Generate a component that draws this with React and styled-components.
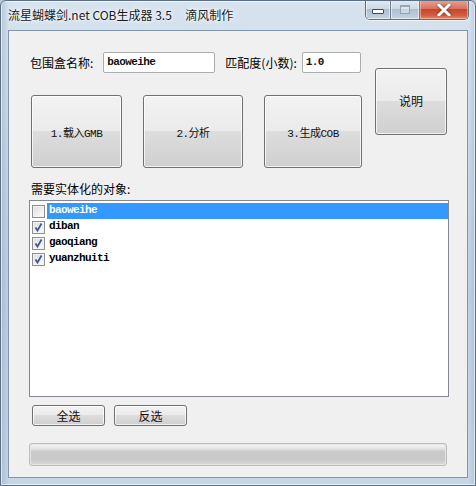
import React from "react";
import styled, { createGlobalStyle } from "styled-components";

const GlobalStyle = createGlobalStyle`
  html, body {
    margin: 0;
    padding: 0;
    background: #b9cbdc;
  }
  #root {
    width: 476px;
    height: 486px;
  }
`;

const items = [
  { name: "baoweihe", checked: false, selected: true },
  { name: "diban", checked: true },
  { name: "gaoqiang", checked: true },
  { name: "yuanzhuiti", checked: true },
];

const App = () => (
  <Window>
    <GlobalStyle />
    <TitleBar>
      <Caption>流星蝴蝶剑.net COB生成器 3.5     滴风制作</Caption>
      <CaptionButtons>
        <CapButton w={24}>
          <MinGlyph />
        </CapButton>
        <CapButton w={28}>
          <MaxGlyph />
        </CapButton>
        <CloseButton>
          <svg width="16" height="12" viewBox="0 0 16 12">
            <path
              d="M3 1 L13 11 M13 1 L3 11"
              stroke="#ffffff"
              strokeWidth="3"
              strokeLinecap="square"
            />
          </svg>
        </CloseButton>
      </CaptionButtons>
    </TitleBar>
    <Client>
      <TopSection>
        <LeftCol>
          <FieldRow>
            <Label>包围盒名称:</Label>
            <TextBox w={112} ml={10}>baoweihe</TextBox>
            <Label ml={10}>匹配度(小数):</Label>
            <TextBox w={59} ml={5}>1.0</TextBox>
          </FieldRow>
          <ButtonRow>
            <BigButton w={91}>1.载入GMB</BigButton>
            <BigButton w={100}>2.分析</BigButton>
            <BigButton w={98}>3.生成COB</BigButton>
          </ButtonRow>
        </LeftCol>
        <HelpButton>说明</HelpButton>
      </TopSection>
      <ListLabel>需要实体化的对象:</ListLabel>
      <ListBox>
        {items.map((it) => (
          <ListRow key={it.name}>
            <CheckBox>
              {it.checked && (
                <svg width="11" height="11" viewBox="0 0 11 11">
                  <path
                    d="M2.5 5.5 L4.5 8.5 L8.5 1.5"
                    stroke="#3d5a9c"
                    strokeWidth="1.8"
                    fill="none"
                  />
                </svg>
              )}
            </CheckBox>
            <ItemText selected={it.selected}>{it.name}</ItemText>
          </ListRow>
        ))}
      </ListBox>
      <SmallRow>
        <SmallButton>全选</SmallButton>
        <SmallButton>反选</SmallButton>
      </SmallRow>
      <Progress>
        <ProgressTrack />
      </Progress>
    </Client>
  </Window>
);

const Window = styled.div`
  width: 476px;
  height: 486px;
  display: flex;
  flex-direction: column;
  box-sizing: border-box;
  border: 1px solid #5d6f82;
  border-radius: 6px 6px 0 0;
  background:
    linear-gradient(90deg, rgba(120,150,185,0.35) 0px, rgba(255,255,255,0) 8px, rgba(255,255,255,0) 468px, rgba(120,150,185,0.35) 476px),
    linear-gradient(180deg, #d6e3ef 0%, #c8d8e7 30%, #bfd1e3 60%, #c6d6e6 100%);
  box-shadow: inset 0 0 0 1px rgba(255, 255, 255, 0.6);
  overflow: hidden;
`;

const TitleBar = styled.div`
  height: 29px;
  display: flex;
  align-items: flex-start;
  justify-content: space-between;
  flex-shrink: 0;
`;

const Caption = styled.div`
  margin: 6px 0 0 7px;
  font-family: "Noto Sans CJK SC", "Noto Sans", sans-serif;
  font-size: 12px;
  line-height: 16px;
  color: #1a1a1a;
  white-space: pre;
  text-shadow: 0 0 6px #ffffff, 0 0 3px #ffffff;
`;

const CaptionButtons = styled.div`
  display: flex;
  margin-right: 6px;
  margin-top: -1px;
  border: 1px solid #5e6f85;
  border-top: none;
  border-radius: 0 0 5px 5px;
  overflow: hidden;
  box-shadow: 0 1px 0 rgba(255, 255, 255, 0.6);
`;

const CapButton = styled.div`
  width: ${(p) => p.w}px;
  height: 19px;
  display: flex;
  align-items: center;
  justify-content: center;
  border-right: 1px solid #6d7e93;
  background: linear-gradient(180deg, #e3ebf3 0%, #ccd9e6 45%, #aebfd2 50%, #c4d3e2 100%);
  box-shadow: inset 0 0 0 1px rgba(255, 255, 255, 0.55);
`;

const MinGlyph = styled.div`
  width: 10px;
  height: 3px;
  margin-top: 4px;
  background: #ffffff;
  border: 1px solid #3c4a5c;
  border-radius: 1px;
`;

const MaxGlyph = styled.div`
  width: 8px;
  height: 6px;
  border: 1px solid #8998aa;
  border-top-width: 2px;
  background: rgba(255, 255, 255, 0.4);
  opacity: 0.8;
`;

const CloseButton = styled.div`
  width: 48px;
  height: 19px;
  display: flex;
  align-items: center;
  justify-content: center;
  background: linear-gradient(180deg, #e8a593 0%, #d9735d 45%, #c8462d 50%, #d25c3e 80%, #e08a6b 100%);
  box-shadow: inset 0 0 0 1px rgba(255, 220, 200, 0.5);

  svg path {
    filter: drop-shadow(0 0 1px #5a1a10);
  }
`;

const Client = styled.div`
  flex: 1;
  margin: 0 7px 7px 7px;
  border: 1px solid #8295aa;
  background: #f0f0f0;
  display: flex;
  flex-direction: column;
  padding-left: 20px;
  font-family: "Noto Sans CJK SC", "Noto Sans", sans-serif;
  font-size: 12px;
  color: #000;
`;

const TopSection = styled.div`
  display: flex;
  align-items: flex-start;
  padding-top: 21px;
`;

const LeftCol = styled.div`
  display: flex;
  flex-direction: column;
`;

const FieldRow = styled.div`
  display: flex;
  align-items: center;
  height: 21px;
`;

const Label = styled.span`
  margin-left: ${(p) => (p.ml || 1)}px;
  line-height: 16px;
  white-space: nowrap;
`;

const TextBox = styled.div`
  box-sizing: border-box;
  width: ${(p) => p.w}px;
  height: 21px;
  margin-left: ${(p) => p.ml}px;
  border: 1px solid #abadb3;
  border-radius: 2px;
  background: #ffffff;
  padding: 0 3px;
  font-family: "Liberation Mono", monospace;
  font-size: 11px;
  letter-spacing: -0.6px;
  line-height: 19px;
  font-weight: bold;
  color: #111;
`;

const ButtonRow = styled.div`
  display: flex;
  gap: 21px;
  margin-top: 22px;
  padding-left: 2px;
`;

const buttonFace = `
  box-sizing: border-box;
  border: 1px solid #707070;
  border-radius: 3px;
  background: linear-gradient(180deg, #f2f2f2 0%, #ebebeb 49%, #dddddd 50%, #cfcfcf 100%);
  box-shadow: inset 0 0 0 1px rgba(255, 255, 255, 0.75);
  display: flex;
  align-items: center;
  justify-content: center;
  font-family: "Liberation Mono", "Noto Sans CJK SC", monospace;
  color: #111;
`;

const BigButton = styled.div`
  ${buttonFace}
  width: ${(p) => p.w}px;
  height: 73px;
  font-size: 11px;
  letter-spacing: -0.5px;
`;

const HelpButton = styled.div`
  ${buttonFace}
  width: 72px;
  height: 67px;
  margin: 16px 0 0 13px;
  font-family: "Noto Sans CJK SC", sans-serif;
  font-size: 12px;
  padding-bottom: 3px;
`;

const ListLabel = styled.div`
  margin: 13px 0 0 2px;
  line-height: 16px;
`;

const ListBox = styled.div`
  box-sizing: border-box;
  width: 420px;
  height: 197px;
  margin-top: 3px;
  border: 1px solid #828790;
  background: #ffffff;
  padding: 2px 0 0 2px;
  display: flex;
  flex-direction: column;
`;

const ListRow = styled.div`
  display: flex;
  align-items: center;
  height: 16px;
`;

const CheckBox = styled.div`
  box-sizing: border-box;
  width: 13px;
  height: 13px;
  margin-right: 2px;
  border: 1px solid #8e8f8f;
  background: linear-gradient(135deg, #dcdcdc 0%, #f4f4f4 70%, #ffffff 100%);
  box-shadow: inset 0 0 0 1px #f4f4f4;
  display: flex;
  align-items: center;
  justify-content: center;
`;

const ItemText = styled.div`
  flex: 1;
  height: 16px;
  padding-left: 2px;
  background: ${(p) => (p.selected ? "#3399ff" : "transparent")};
  color: ${(p) => (p.selected ? "#ffffff" : "#000000")};
  font-family: "Liberation Mono", monospace;
  font-size: 11px;
  letter-spacing: -0.6px;
  line-height: 15px;
  font-weight: bold;
`;

const SmallRow = styled.div`
  display: flex;
  gap: 9px;
  margin: 8px 0 0 3px;
`;

const SmallButton = styled.div`
  ${buttonFace}
  width: 73px;
  height: 21px;
  font-family: "Noto Sans CJK SC", sans-serif;
  font-size: 12px;
`;

const Progress = styled.div`
  box-sizing: border-box;
  width: 418px;
  height: 23px;
  margin-top: 17px;
  border: 1px solid #bcbcbc;
  border-radius: 3px;
  background: #e6e6e6;
  padding: 1px;
`;

const ProgressTrack = styled.div`
  height: 100%;
  border-radius: 2px;
  background: linear-gradient(180deg, #f3f3f3 0%, #e2e2e2 20%, #c9c9c9 35%, #c9c9c9 75%, #d6d6d6 100%);
`;

export default App;
